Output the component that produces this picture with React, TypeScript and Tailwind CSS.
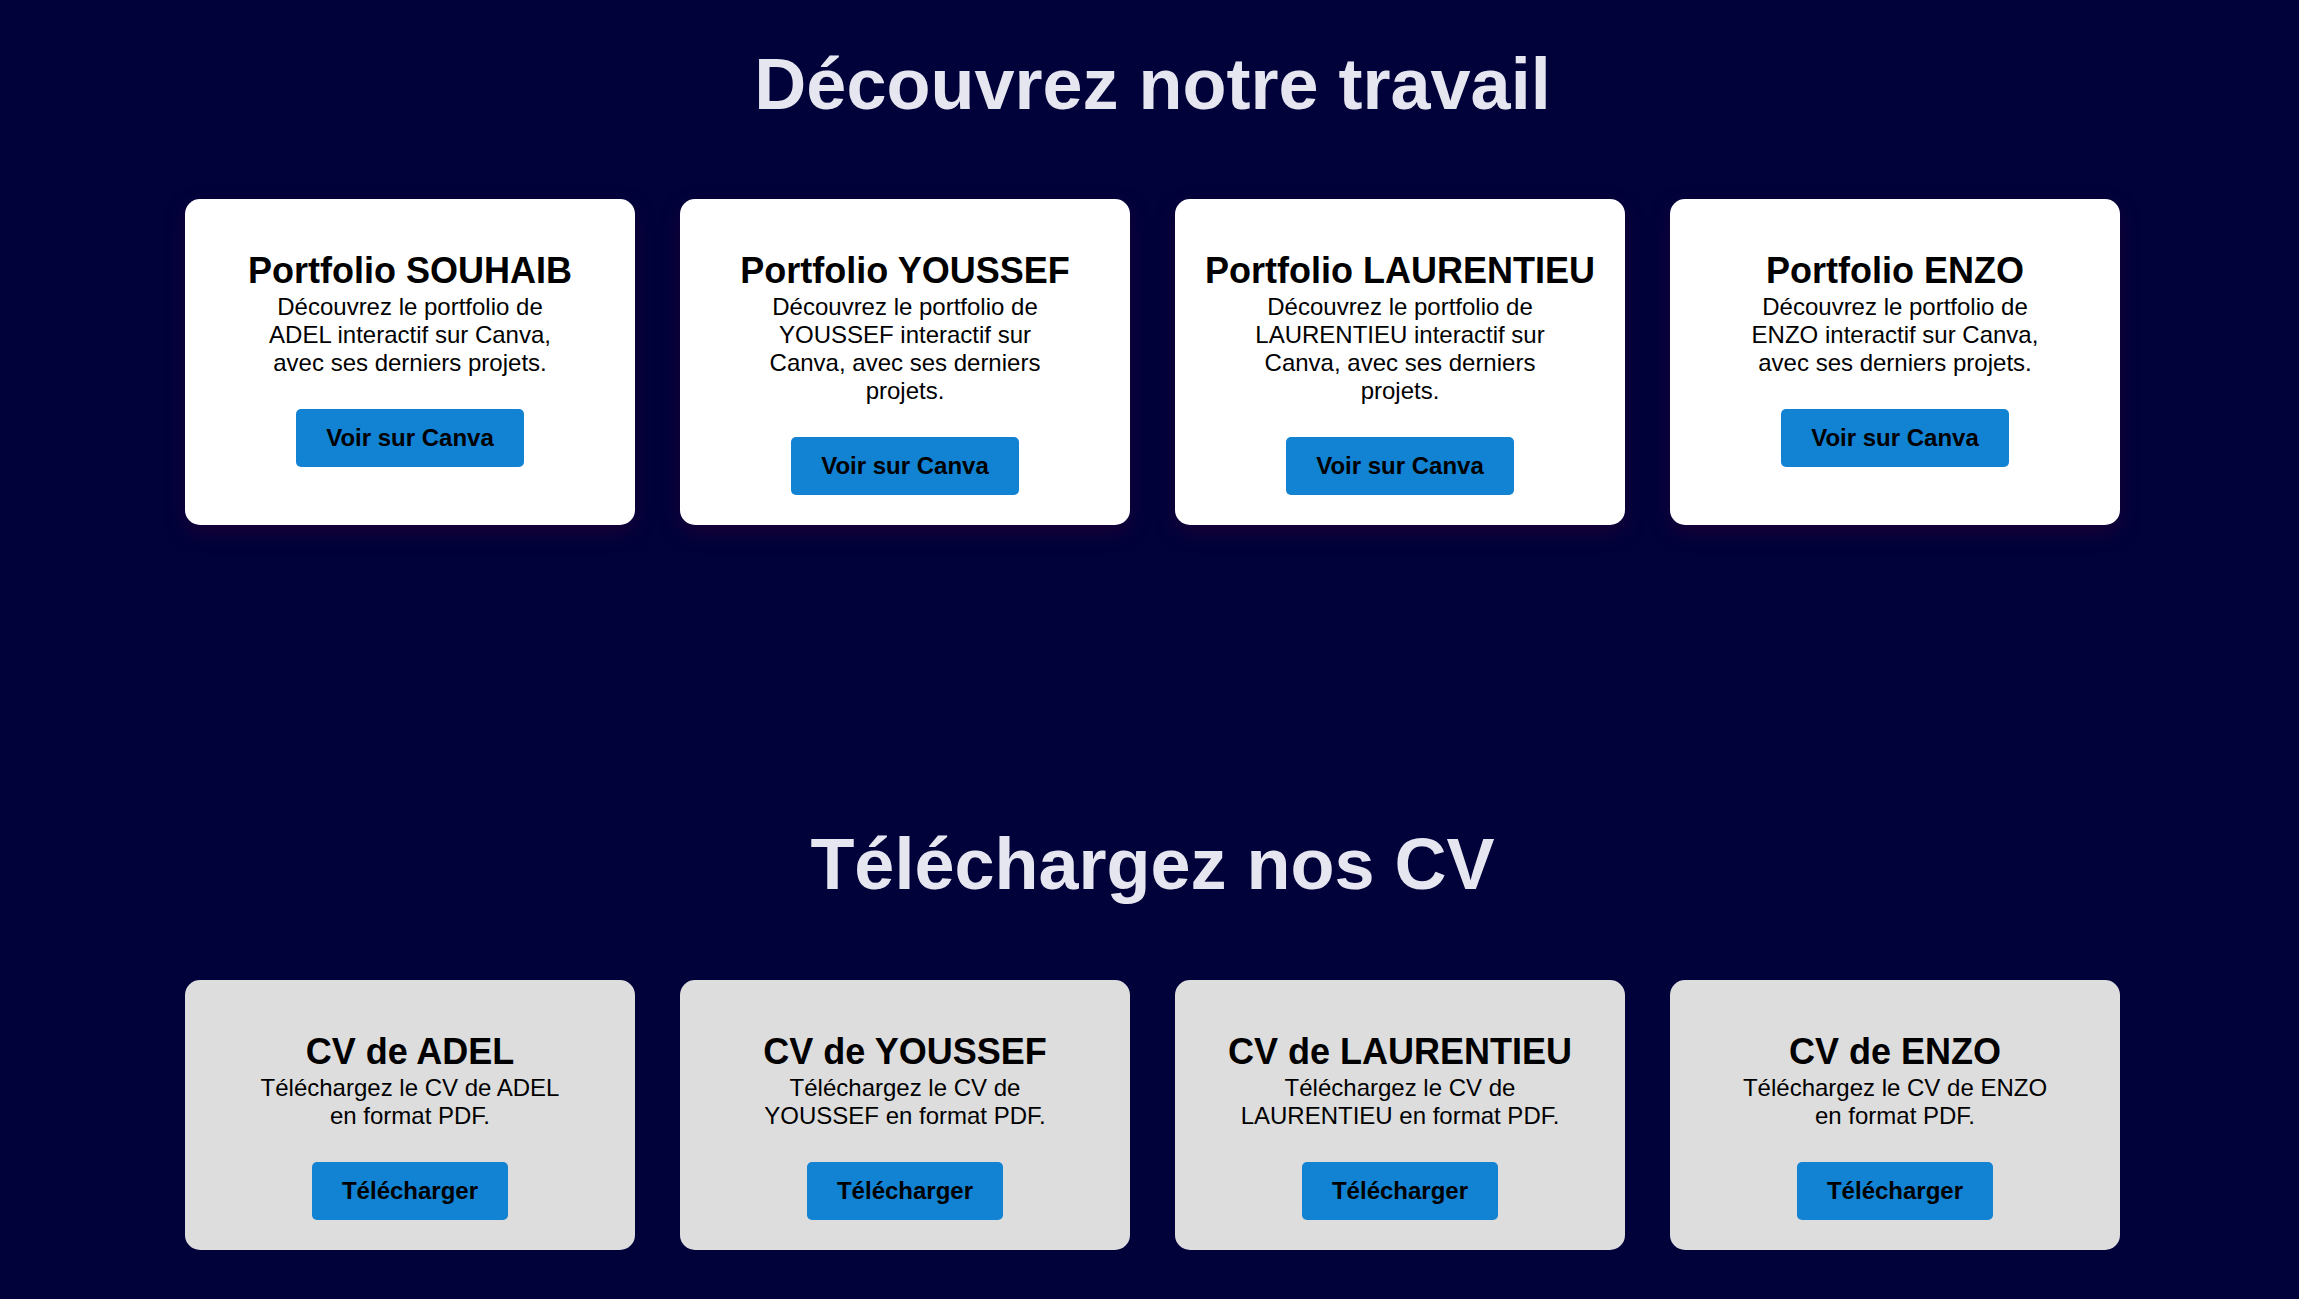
import React from "react";

const portfolios = [
  { title: "Portfolio SOUHAIB", text: "Découvrez le portfolio de ADEL interactif sur Canva, avec ses derniers projets." },
  { title: "Portfolio YOUSSEF", text: "Découvrez le portfolio de YOUSSEF interactif sur Canva, avec ses derniers projets." },
  { title: "Portfolio LAURENTIEU", text: "Découvrez le portfolio de LAURENTIEU interactif sur Canva, avec ses derniers projets." },
  { title: "Portfolio ENZO", text: "Découvrez le portfolio de ENZO interactif sur Canva, avec ses derniers projets." },
];

const cvs = [
  { title: "CV de ADEL", text: "Téléchargez le CV de ADEL en format PDF." },
  { title: "CV de YOUSSEF", text: "Téléchargez le CV de YOUSSEF en format PDF." },
  { title: "CV de LAURENTIEU", text: "Téléchargez le CV de LAURENTIEU en format PDF." },
  { title: "CV de ENZO", text: "Téléchargez le CV de ENZO en format PDF." },
];

type CardProps = {
  title: string;
  text: string;
  label: string;
  light?: boolean;
};

const Card = ({ title, text, label, light }: CardProps) => (
  <div
    className={`w-[450px] rounded-[15px] px-[30px] pt-[50px] pb-[30px] text-center text-black ${
      light ? "bg-white shadow-[0_8px_18px_rgba(40,0,50,0.55)]" : "bg-[#dddddd]"
    }`}
  >
    <h2 className="text-[36px] font-bold leading-[44px]">{title}</h2>
    <p className="mx-auto max-w-[330px] text-[24px] leading-[normal]">{text}</p>
    <button className="mt-[32px] rounded-[5px] bg-[#1282d3] px-[30px] py-[15px] text-[24px] font-bold leading-[normal] text-black">
      {label}
    </button>
  </div>
);

export default function App() {
  return (
    <div className="min-h-screen bg-[#02023b] pt-[43px] pb-[60px] pl-[6px] font-['Liberation_Sans',Arial,sans-serif]">
      <section>
        <h1 className="text-center text-[72px] font-bold leading-[normal] text-[#e6e6f0]">Découvrez notre travail</h1>
        <div className="mt-[74px] flex justify-center gap-[45px]">
          {portfolios.map((p) => (
            <Card key={p.title} title={p.title} text={p.text} label="Voir sur Canva" light />
          ))}
        </div>
      </section>

      <section className="mt-[298px]">
        <h1 className="text-center text-[72px] font-bold leading-[normal] text-[#e6e6f0]">Téléchargez nos CV</h1>
        <div className="mt-[75px] flex justify-center gap-[45px]">
          {cvs.map((c) => (
            <Card key={c.title} title={c.title} text={c.text} label="Télécharger" />
          ))}
        </div>
      </section>
    </div>
  );
}
